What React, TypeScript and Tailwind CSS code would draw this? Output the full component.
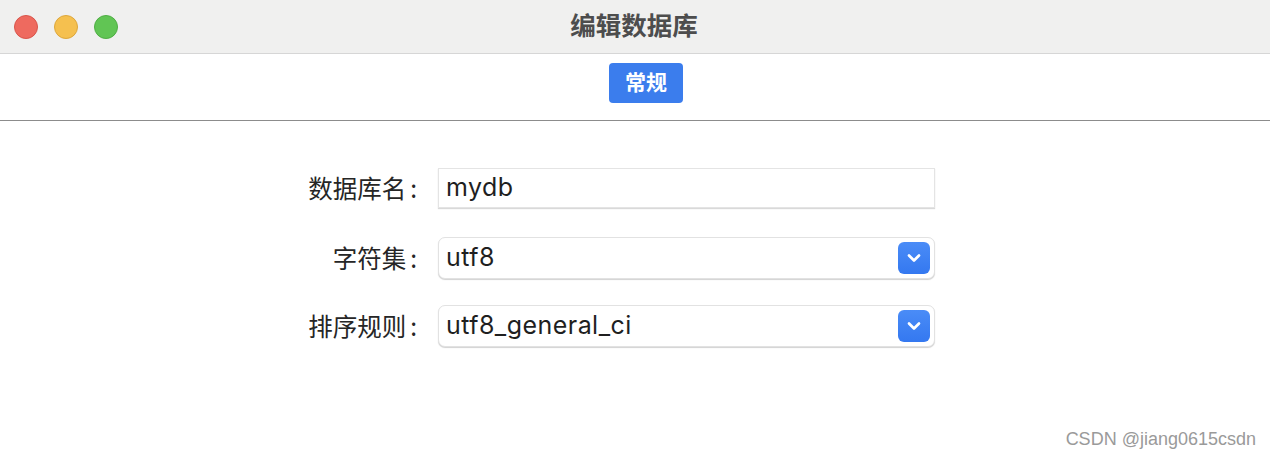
import { ChevronDown } from 'lucide-react';

const font = { fontFamily: '"Inter", "Noto Sans CJK SC", sans-serif' };

function Select({ value }: { value: string }) {
  return (
    <div className="flex h-[42px] w-[497px] items-center justify-between rounded-[7px] border border-[#e2e2e2] bg-white pl-[7px] pr-[4px] shadow-[0_1px_1px_rgba(0,0,0,0.18)]">
      <span className="text-[25px] tracking-[0.45px] text-[#1f1f1f]">{value}</span>
      <span className="flex h-[32px] w-[32px] items-center justify-center rounded-[6px] bg-gradient-to-b from-[#4a8cf7] to-[#3478f0]">
        <ChevronDown className="h-[20px] w-[20px] text-white" strokeWidth={3.2} />
      </span>
    </div>
  );
}

function Label({ text }: { text: string }) {
  return (
    <div
      className="w-[140px] pr-[11px] text-right text-[24.5px] text-[#262626]"
      style={{ fontFamily: '"Noto Sans CJK SC", sans-serif' }}
    >
      {text}
      <span className="ml-[4px]">:</span>
    </div>
  );
}

export default function App() {
  return (
    <div className="relative h-[460px] w-[1270px] bg-white" style={font}>
      <div className="flex h-[54px] items-center border-b border-[#d6d6d6] bg-[#f0f0ef]">
        <div className="flex gap-[16px] pl-[14px]">
          <span className="h-[24px] w-[24px] rounded-full border border-[#d9554b] bg-[#ee6a5f]" />
          <span className="h-[24px] w-[24px] rounded-full border border-[#dda73c] bg-[#f5c04f]" />
          <span className="h-[24px] w-[24px] rounded-full border border-[#4fae44] bg-[#61c554]" />
        </div>
        <div className="flex-1 pr-[120px] text-center text-[25.5px] font-bold text-[#4d4d4d]">编辑数据库</div>
      </div>

      <div className="flex h-[67px] justify-center border-b border-[#8c8c8c] pt-[9px]">
        <div className="ml-[22px] flex h-[40px] w-[74px] items-center justify-center rounded-[4px] bg-[#3b7ded] text-[21px] font-bold text-white">
          常规
        </div>
      </div>

      <div className="flex flex-col pl-[288px] pt-[47px]">
        <div className="flex items-center gap-[10px]">
          <Label text="数据库名" />
          <div className="flex h-[40px] w-[497px] items-center border border-[#e4e4e4] bg-white pl-[7px] shadow-[0_1px_1px_rgba(0,0,0,0.15)]">
            <span className="text-[25px] tracking-[0.45px] text-[#1f1f1f]">mydb</span>
          </div>
        </div>
        <div className="mt-[29px] flex items-center gap-[10px]">
          <Label text="字符集" />
          <Select value="utf8" />
        </div>
        <div className="mt-[26px] flex items-center gap-[10px]">
          <Label text="排序规则" />
          <Select value="utf8_general_ci" />
        </div>
      </div>

      <div
        className="absolute bottom-[7px] right-[14px] text-[18px] text-[#9a9a9a]"
        style={{ fontFamily: '"Liberation Sans", sans-serif' }}
      >
        CSDN @jiang0615csdn
      </div>
    </div>
  );
}
